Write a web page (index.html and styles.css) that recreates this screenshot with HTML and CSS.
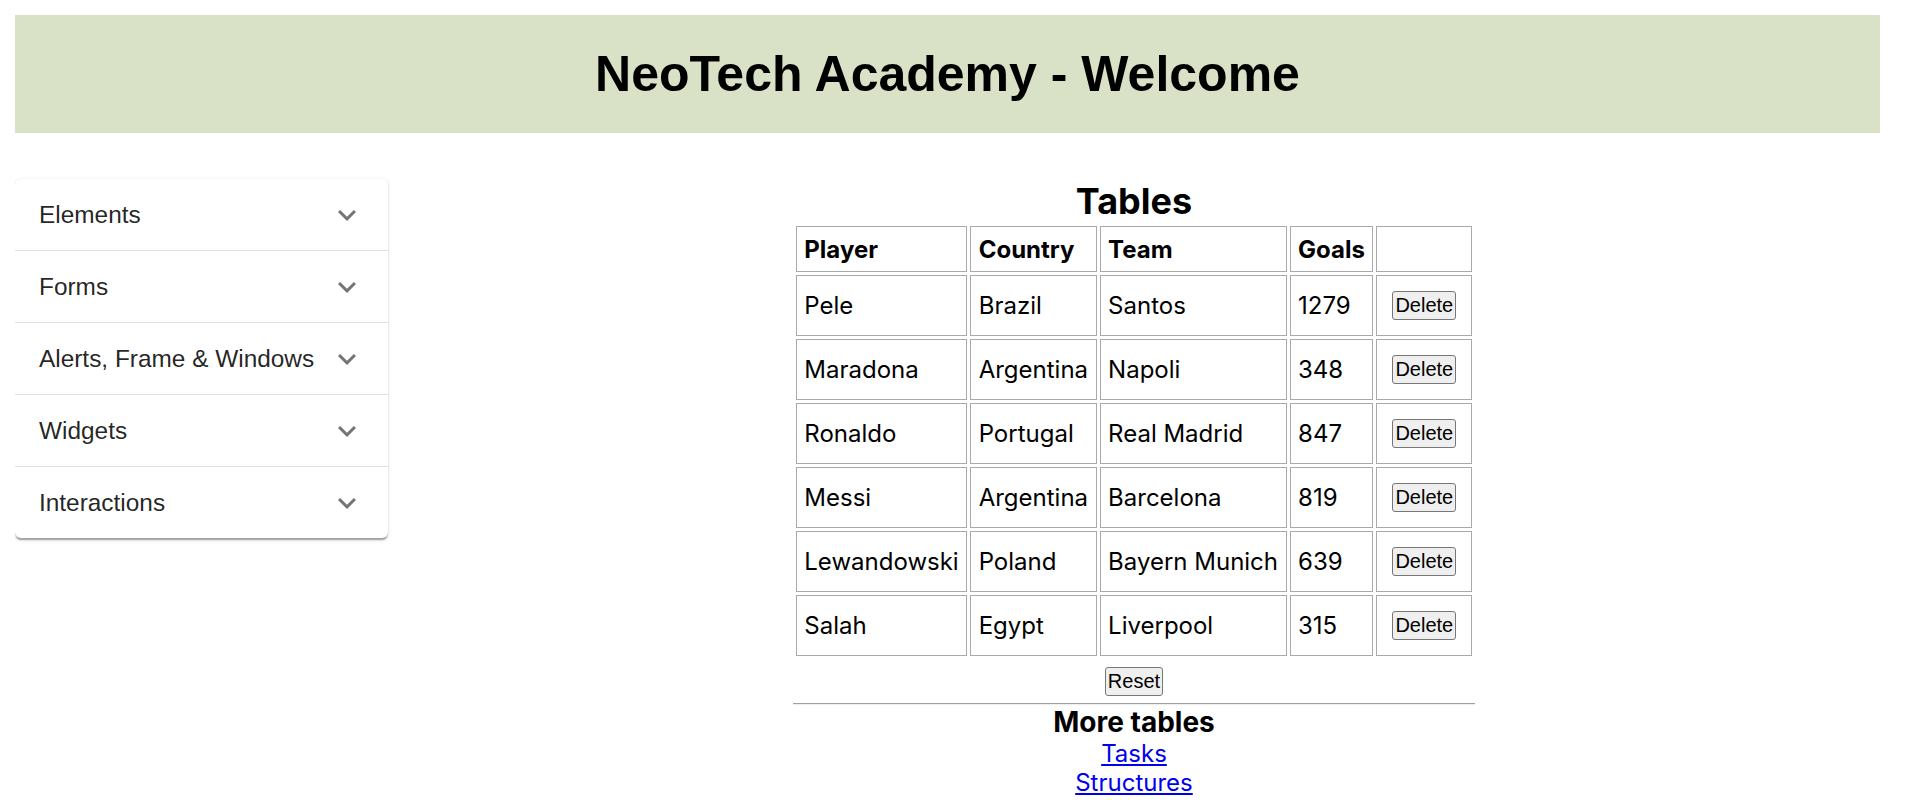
FILE: index.html
```html
<!DOCTYPE html>
<html lang="en">
<head>
<meta charset="utf-8">
<title>NeoTech Academy - Tables</title>
<link rel="stylesheet" href="styles.css">
</head>
<body>
<header class="banner">
  <h1 class="banner-title">NeoTech Academy - Welcome</h1>
</header>
<div class="layout">
  <nav class="sidebar">
    <div class="acc-item"><span class="acc-label">Elements</span><svg class="acc-icon" viewBox="0 0 24 24"><path d="M16.59 8.59 12 13.17 7.41 8.59 6 10l6 6 6-6z"/></svg></div>
    <div class="acc-item"><span class="acc-label">Forms</span><svg class="acc-icon" viewBox="0 0 24 24"><path d="M16.59 8.59 12 13.17 7.41 8.59 6 10l6 6 6-6z"/></svg></div>
    <div class="acc-item"><span class="acc-label">Alerts, Frame &amp; Windows</span><svg class="acc-icon" viewBox="0 0 24 24"><path d="M16.59 8.59 12 13.17 7.41 8.59 6 10l6 6 6-6z"/></svg></div>
    <div class="acc-item"><span class="acc-label">Widgets</span><svg class="acc-icon" viewBox="0 0 24 24"><path d="M16.59 8.59 12 13.17 7.41 8.59 6 10l6 6 6-6z"/></svg></div>
    <div class="acc-item"><span class="acc-label">Interactions</span><svg class="acc-icon" viewBox="0 0 24 24"><path d="M16.59 8.59 12 13.17 7.41 8.59 6 10l6 6 6-6z"/></svg></div>
  </nav>
  <main class="main">
    <section class="tables">
      <h2 class="tables-title">Tables</h2>
      <table class="players">
        <thead>
          <tr><th>Player</th><th>Country</th><th>Team</th><th>Goals</th><th></th></tr>
        </thead>
        <tbody>
          <tr><td>Pele</td><td>Brazil</td><td>Santos</td><td>1279</td><td><button class="btn del">Delete</button></td></tr>
          <tr><td>Maradona</td><td>Argentina</td><td>Napoli</td><td>348</td><td><button class="btn del">Delete</button></td></tr>
          <tr><td>Ronaldo</td><td>Portugal</td><td>Real Madrid</td><td>847</td><td><button class="btn del">Delete</button></td></tr>
          <tr><td>Messi</td><td>Argentina</td><td>Barcelona</td><td>819</td><td><button class="btn del">Delete</button></td></tr>
          <tr><td>Lewandowski</td><td>Poland</td><td>Bayern Munich</td><td>639</td><td><button class="btn del">Delete</button></td></tr>
          <tr><td>Salah</td><td>Egypt</td><td>Liverpool</td><td>315</td><td><button class="btn del">Delete</button></td></tr>
        </tbody>
      </table>
      <div class="reset-row"><button class="btn">Reset</button></div>
      <hr class="divider">
      <h3 class="more-title">More tables</h3>
      <div class="links">
        <a href="#" class="link">Tasks</a>
        <a href="#" class="link">Structures</a>
      </div>
    </section>
  </main>
</div>
</body>
</html>
```

FILE: styles.css
```css
body {
  margin: 15px 40px 0 15px;
  background: #ffffff;
  color: #000000;
  font-family: Inter, "Noto Sans", sans-serif;
  font-size: 24px;
}

.banner {
  height: 118px;
  background: #d9e1c6;
  display: flex;
  align-items: center;
  justify-content: center;
}
.banner-title {
  margin: 0;
  font-family: "Liberation Sans", Arial, sans-serif;
  font-weight: 700;
  font-size: 50px;
  line-height: normal;
}

.layout {
  display: flex;
  align-items: flex-start;
  margin-top: 46px;
  padding-bottom: 200px;
}

.sidebar {
  flex: none;
  width: 373px;
  background: #ffffff;
  border-radius: 6px;
  box-shadow: 0 3px 1.5px -1.5px rgba(0,0,0,0.2), 0 1.5px 1.5px 0 rgba(0,0,0,0.14), 0 1.5px 4.5px 0 rgba(0,0,0,0.12);
  font-family: "Liberation Sans", Arial, sans-serif;
}
.acc-item {
  box-sizing: border-box;
  height: 72px;
  display: flex;
  align-items: center;
  padding: 0 23px 0 24px;
  border-top: 1px solid rgba(0,0,0,0.12);
}
.acc-item:first-child {
  height: 71px;
  border-top: 0;
}
.acc-label {
  flex: 1;
  font-size: 24.4px;
  line-height: 36px;
  color: rgba(0,0,0,0.87);
  white-space: nowrap;
}
.acc-icon {
  flex: none;
  width: 36px;
  height: 36px;
  fill: rgba(0,0,0,0.54);
}

.main {
  flex: 1;
  display: flex;
  justify-content: center;
}
.tables {
  display: flex;
  flex-direction: column;
}
.tables-title {
  margin: 0;
  font-size: 36px;
  font-weight: 700;
  line-height: normal;
  text-align: center;
}

.players {
  border-spacing: 3px;
  font-size: 24px;
}
.players th,
.players td {
  border: 1px solid #a9a9a9;
  padding: 7.5px;
  text-align: left;
  vertical-align: middle;
  line-height: normal;
  white-space: nowrap;
}
.players th {
  font-weight: 700;
}

.btn {
  font-family: "Liberation Sans", Arial, sans-serif;
  font-size: 20px;
  line-height: normal;
  padding: 2px;
  color: #000000;
  background: #efefef;
  border: 1px solid #767676;
  border-radius: 3px;
}
.del {
  display: block;
  margin: 7.5px;
}

.reset-row {
  display: flex;
  justify-content: center;
  padding-top: 8px;
}

.divider {
  margin: 7px 0 0 0;
  height: 0;
  border: 0;
  border-top: 1px solid #a0a0a0;
  border-bottom: 1px solid #eeeeee;
}

.more-title {
  margin: 0;
  font-size: 28px;
  font-weight: 700;
  line-height: normal;
  text-align: center;
}
.links {
  display: flex;
  flex-direction: column;
  align-items: center;
}
.link {
  color: #0000ee;
  text-decoration: underline;
  line-height: normal;
}
```
